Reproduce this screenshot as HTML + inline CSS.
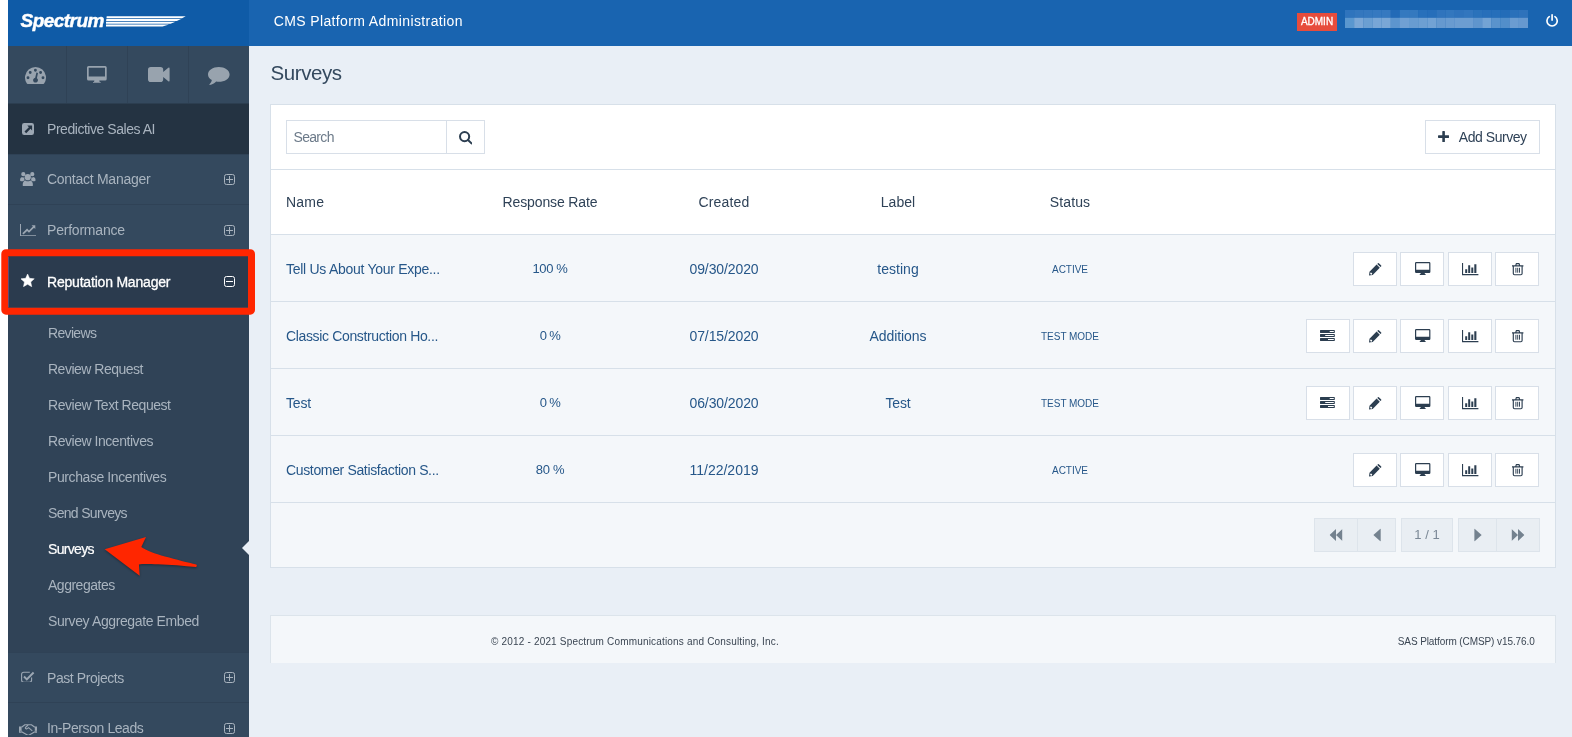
<!DOCTYPE html>
<html lang="en">
<head>
<meta charset="utf-8">
<title>Surveys - CMS Platform Administration</title>
<style>
*{box-sizing:border-box;margin:0;padding:0}
html,body{width:1572px;height:737px;overflow:hidden;background:#fff}
body{font-family:"Liberation Sans",sans-serif;font-size:13px;color:#34495e;position:relative}
.abs{position:absolute}
#wrap{position:absolute;left:8px;top:0;width:1564px;height:737px;background:#e9eff6;overflow:hidden;will-change:transform}
/* header */
#hdr-l{left:0;top:0;width:241px;height:46px;background:#0f5ba7}
#hdr-r{left:241px;top:0;width:1323px;height:46px;background:#1964b0}
#brand{left:265.7px;top:12px;color:#fff;font-size:14px;line-height:18px;white-space:nowrap}
#admin{left:1289px;top:13px;width:40px;height:18px;background:#e74c3c;color:#fff;font-size:10px;line-height:18px;text-align:center;-webkit-text-stroke:.3px #fff}
/* sidebar */
#side{left:0;top:46px;width:241px;height:691px;background:#34495e}
.ic-row{left:0;top:0;width:241px;height:57px}
.ic-row div{position:absolute;top:0;height:57px;width:1px;background:#2f4256}
.ic-row svg{position:absolute}
.nav{left:0;width:241px;height:51px;border-top:1px solid #2f4256;color:#a9b4bf;font-size:14px;line-height:50px;white-space:nowrap}
.nav .t{position:absolute;left:39px;top:0}
.nav svg.i{position:absolute;left:13px;top:17px}
.nav .pm{position:absolute;left:216px;top:19px;width:11px;height:11px;border:1px solid #a9b4bf;border-radius:2.500px}
.nav .pm:before{content:"";position:absolute;left:1px;top:4px;width:7px;height:1px;background:#a9b4bf}
.nav .pm.plus:after{content:"";position:absolute;left:4px;top:1px;width:1px;height:7px;background:#a9b4bf}
.nav.up{height:52px;line-height:51px}
.nav.up svg.i,.nav.up .pm{margin-top:1px}
.nav.dark{background:#243342;border-top-color:#2c3e50}
.nav.act{background:#2b3b4e;color:#fff;border-top-color:#2b3b4e;box-shadow:inset 1px 0 0 #1d5ba5}
.nav.act .t{-webkit-text-stroke:.3px #fff}
.nav.act .pm{border-color:#fff}
.nav.act .pm:before{background:#fff}
#sub{left:0;top:261px;width:241px;height:345px;background:#304357;padding-top:8px}
#sub a{display:block;height:36px;line-height:36px;padding-left:40px;color:#a9b4bf;font-size:14px;white-space:nowrap;text-decoration:none}
#sub a.on{color:#fff;-webkit-text-stroke:.2px #fff}
#notch{left:234px;top:541px;width:0;height:0;border-top:7px solid transparent;border-bottom:7px solid transparent;border-right:7px solid #e9eff6}
/* main */
h1{position:absolute;left:262.5px;top:58.500px;font-size:20.500px;line-height:28px;font-weight:normal;color:#34495e;white-space:nowrap}
#panel{left:262px;top:104px;width:1286px;height:464px;background:#f4f7fa;border:1px solid #d7e0e9}
#ptop{left:0;top:0;width:1284px;height:129px;background:#fff}
.hl{left:0;width:1284px;height:1px;background:#d7e0e9}
#search{left:15px;top:15px;width:161px;height:34px;border:1px solid #d8dfe8;background:#fff;color:#6c7a89;font-size:14px;line-height:32px;padding-left:6.500px}
#sbtn{left:175px;top:15px;width:39px;height:34px;border:1px solid #d8dfe8;background:#fff}
#add{left:1154px;top:15px;width:115px;height:34px;border:1px solid #d8dfe8;background:#fff;color:#2f4257;font-size:14px;line-height:32px;white-space:nowrap}
.th{top:65px;height:64px;line-height:64px;font-size:14px;color:#2f4257;white-space:nowrap}
.c{width:174px;text-align:center}
.row{left:0;width:1284px;height:67px;line-height:68px;color:#265789;font-size:14px;white-space:nowrap}
.row span{position:absolute;top:0}
.row .st{font-size:10px;letter-spacing:0;top:.500px}
.btn{position:absolute;top:17px;width:44px;height:34px;border:1px solid #d8dfe8;background:#fff}
.btn svg{position:absolute}
.pg svg{position:absolute;left:50%;top:50%;transform:translate(-50%,-50%)}
#logotxt{left:12.600px;top:8.500px;color:#fff;font-size:19px;line-height:24px;font-weight:bold;font-style:italic;letter-spacing:-.55px;white-space:nowrap;-webkit-text-stroke:.45px #fff}
.pg{top:413px;height:34px;border:1px solid #dde4eb;background:#e9eef3}
#foot{left:262px;top:615px;width:1286px;height:48px;background:#f4f7fa;border:1px solid #dce4eb;border-bottom:0;font-size:10px;line-height:51px;color:#3b4653;white-space:nowrap}
</style>
</head>
<body>
<div id="wrap">
  <div id="hdr-l" class="abs"></div>
  <div id="hdr-r" class="abs"></div>
  <div id="logotxt" class="abs">Spectrum</div><svg id="logo" class="abs" style="left:97.5px;top:15.500px" width="81" height="12" viewBox="0 0 81 12"><path fill="#fff" d="M0.700,0.300H79.700L76,2.250H0.450ZM0.350,3.050H75L70.800,5H0.100ZM0,5.800H69.500L64.500,7.750H-0.250ZM-0.350,8.550H63L56.500,10.600H-0.700Z"/></svg>
  <div id="brand" class="abs" style="letter-spacing:0.38px;">CMS Platform Administration</div>
  <div id="admin" class="abs">ADMIN</div>
  <svg id="pw" class="abs" style="left:1538px;top:14.200px" width="12.200" height="12.400" viewBox="0 0 12.400 12.600"><path fill="none" stroke="#fff" stroke-width="1.700" stroke-linecap="round" d="M3.300,2.700A5.200,5.200 0 1 0 9.100,2.700M6.200,0.850V6.200"/></svg>
  <svg id="user" class="abs" style="left:1336.500px;top:9.800px;filter:blur(.5px)" width="183" height="18" preserveAspectRatio="none" viewBox="0 0 181.500 17.800"><rect x="0.00" y="0" width="9.2" height="7.800" fill="#2f74bd"/><rect x="0.00" y="7.700" width="9.2" height="10.100" fill="#5a97cf"/><rect x="9.07" y="0" width="9.2" height="7.800" fill="#3477be"/><rect x="9.07" y="7.700" width="9.2" height="10.100" fill="#7ba7d6"/><rect x="18.14" y="0" width="9.2" height="7.800" fill="#3578bf"/><rect x="18.14" y="7.700" width="9.2" height="10.100" fill="#6b9fd2"/><rect x="27.21" y="0" width="9.2" height="7.800" fill="#3679c0"/><rect x="27.21" y="7.700" width="9.2" height="10.100" fill="#78a6d6"/><rect x="36.28" y="0" width="9.2" height="7.800" fill="#3679c0"/><rect x="36.28" y="7.700" width="9.2" height="10.100" fill="#7aa7d6"/><rect x="45.35" y="0" width="9.2" height="7.800" fill="#226ab7"/><rect x="45.35" y="7.700" width="9.2" height="10.100" fill="#5d95ce"/><rect x="54.42" y="0" width="9.2" height="7.800" fill="#3479bf"/><rect x="54.42" y="7.700" width="9.2" height="10.100" fill="#70a0d3"/><rect x="63.49" y="0" width="9.2" height="7.800" fill="#3479bf"/><rect x="63.49" y="7.700" width="9.2" height="10.100" fill="#689cd1"/><rect x="72.56" y="0" width="9.2" height="7.800" fill="#2870bb"/><rect x="72.56" y="7.700" width="9.2" height="10.100" fill="#6d9fd2"/><rect x="81.63" y="0" width="9.2" height="7.800" fill="#266eba"/><rect x="81.63" y="7.700" width="9.2" height="10.100" fill="#72a2d4"/><rect x="90.70" y="0" width="9.2" height="7.800" fill="#3074bd"/><rect x="90.70" y="7.700" width="9.2" height="10.100" fill="#6699cf"/><rect x="99.77" y="0" width="9.2" height="7.800" fill="#3377be"/><rect x="99.77" y="7.700" width="9.2" height="10.100" fill="#699bd0"/><rect x="108.84" y="0" width="9.2" height="7.800" fill="#2f73bc"/><rect x="108.84" y="7.700" width="9.2" height="10.100" fill="#6c9dd1"/><rect x="117.91" y="0" width="9.2" height="7.800" fill="#3276be"/><rect x="117.91" y="7.700" width="9.2" height="10.100" fill="#6c9dd1"/><rect x="126.98" y="0" width="9.2" height="7.800" fill="#2a72bb"/><rect x="126.98" y="7.700" width="9.2" height="10.100" fill="#5f95cd"/><rect x="136.05" y="0" width="9.2" height="7.800" fill="#276fba"/><rect x="136.05" y="7.700" width="9.2" height="10.100" fill="#73a3d4"/><rect x="145.12" y="0" width="9.2" height="7.800" fill="#266fba"/><rect x="145.12" y="7.700" width="9.2" height="10.100" fill="#5a93cc"/><rect x="154.19" y="0" width="9.2" height="7.800" fill="#236cb8"/><rect x="154.19" y="7.700" width="9.2" height="10.100" fill="#528eca"/><rect x="163.26" y="0" width="9.2" height="7.800" fill="#2a70ba"/><rect x="163.26" y="7.700" width="9.2" height="10.100" fill="#6b9cd1"/><rect x="172.33" y="0" width="9.2" height="7.800" fill="#2e72bb"/><rect x="172.33" y="7.700" width="9.2" height="10.100" fill="#6698cf"/></svg>

  <div id="side" class="abs">
    <div class="ic-row abs"><svg style="left:17.2px;top:20.7px" width="21" height="17" viewBox="0 0 21 17"><path fill="#98a3ae" fill-rule="evenodd" d="M1.600,16.100A10.500,10.500 0 1 1 19.400,16.100Q19.100,17 18.200,17H2.800Q1.900,17 1.600,16.100ZM1.55,10.80a1.45,1.45 0 1,0 2.9,0a1.45,1.45 0 1,0 -2.9,0ZM3.75,5.50a1.45,1.45 0 1,0 2.9,0a1.45,1.45 0 1,0 -2.9,0ZM8.95,3.20a1.45,1.45 0 1,0 2.9,0a1.45,1.45 0 1,0 -2.9,0ZM14.15,5.50a1.45,1.45 0 1,0 2.9,0a1.45,1.45 0 1,0 -2.9,0ZM16.55,10.80a1.45,1.45 0 1,0 2.9,0a1.45,1.45 0 1,0 -2.9,0ZM11.400,5.500L13,5.900L11.900,11.200A2.400,2.400 0 1 1 10.200,10.800Z"/></svg><svg style="left:79px;top:20.2px" width="20" height="17" viewBox="0 0 20 17"><path fill="#98a3ae" fill-rule="evenodd" d="M1.600,0H18.100Q19.700,0 19.700,1.600V13Q19.700,14.600 18.100,14.600H1.600Q0,14.600 0,13V1.600Q0,0 1.600,0ZM1.700,1.700V10.400H18V1.700ZM7.400,14.600H12.300L12.700,15.900H13.700V16.800H6V15.900H7Z"/></svg><svg style="left:139.7px;top:21px" width="22" height="15" viewBox="0 0 22 15"><path fill="#98a3ae" d="M2.8,0H12.4Q15.2,0 15.2,2.8V4.9L20.3,0.7Q21.6,0 21.6,1.5V13.5Q21.6,15 20.3,14.3L15.2,10.1V12.2Q15.2,15 12.4,15H2.8Q0,15 0,12.2V2.8Q0,0 2.8,0Z"/></svg><svg style="left:200.4px;top:21px" width="22" height="18" viewBox="0 0 22 18"><path fill="#98a3ae" d="M10.8,0C16.8,0 21.6,3.3 21.6,7.4C21.6,11.5 16.8,14.8 10.8,14.8C9.9,14.8 9,14.7 8.200,14.600C6.500,16.400 4.200,17.600 1.800,17.900C1.400,18 1.200,17.600 1.500,17.300C2.700,16.200 3.600,14.700 3.800,13.100C1.500,11.700 0,9.700 0,7.400C0,3.300 4.800,0 10.800,0Z"/></svg><div style="left:58px"></div><div style="left:119px"></div><div style="left:180px"></div></div>
    <div class="nav dark abs" style="top:57px;line-height:50px"><svg class="i" style="left:14px;top:18.9px" width="12" height="12" viewBox="0 0 12 12"><path fill="#9ca7b3" fill-rule="evenodd" d="M2.200,0H9.800Q12,0 12,2.200V9.800Q12,12 9.800,12H2.200Q0,12 0,9.800V2.200Q0,0 2.200,0ZM5.300,2.600H10.100V7.400L8.550,5.850L4.200,10.200L2.500,8.500L6.850,4.150Z"/></svg><span class="t" style="letter-spacing:-0.46px;">Predictive Sales AI</span></div>
    <div class="nav abs" style="top:108px;line-height:48px"><svg class="i" style="left:12.1px;top:16.700px" width="15.6" height="14.6" viewBox="0 0 15.6 14.6"><path fill="#9ca7b3" d="M4.70,5.20a3.1,3.1 0 1,0 6.2,0a3.1,3.1 0 1,0 -6.2,0ZM2.700,13Q2.700,9.100 5.400,8.500Q7.800,10.200 10.200,8.500Q12.900,9.100 12.900,13Q12.900,14.600 11.300,14.600H4.300Q2.700,14.600 2.700,13ZM1.20,2.20a2.1,2.1 0 1,0 4.2,0a2.1,2.1 0 1,0 -4.2,0ZM10.20,2.20a2.1,2.1 0 1,0 4.2,0a2.1,2.1 0 1,0 -4.2,0ZM0,8Q0,5.100 2,4.900Q3.100,5.700 4.400,5.400Q4,7 4.700,8.300Q3.600,8.600 3,9.300H1.400Q0,9.300 0,8ZM15.600,8Q15.600,5.100 13.600,4.900Q12.500,5.700 11.200,5.400Q11.600,7 10.900,8.300Q12,8.600 12.600,9.300H14.200Q15.600,9.300 15.600,8Z"/></svg><span class="t" style="letter-spacing:-0.27px;">Contact Manager</span><i class="pm plus"></i></div>
    <div class="nav up abs" style="top:158px"><svg class="i" style="left:11.8px;top:17.800px" width="16.4" height="12.300" viewBox="0 0 16.4 12.300"><path fill="#9ca7b3" d="M0,0H1V11.300H16.400V12.300H0ZM11.600,1.300H15.300V5L14.050,3.750L9,8.800L7.100,6.900L3.500,10.500L2.300,9.300L7.100,4.500L9,6.400L12.850,2.550Z"/></svg><span class="t" style="letter-spacing:-0.21px;">Performance</span><i class="pm plus"></i></div>
    <div class="nav act abs" style="top:210px"><svg class="i" style="left:13.400px;top:17.300px" width="13.300" height="12.900" viewBox="0 0 13.300 12.900"><path fill="#fff" stroke="#fff" stroke-width=".5" stroke-linejoin="round" d="M6.60,0.00L8.54,4.33L13.26,4.84L9.74,8.02L10.71,12.66L6.60,10.30L2.49,12.66L3.46,8.02L-0.06,4.84L4.66,4.33Z"/></svg><span class="t" style="letter-spacing:-0.2px;">Reputation Manager</span><i class="pm"></i></div>
    <div id="sub" class="abs">
      <a style="letter-spacing:-0.67px;">Reviews</a><a style="letter-spacing:-0.5px;">Review Request</a><a style="letter-spacing:-0.46px;">Review Text Request</a><a style="letter-spacing:-0.46px;">Review Incentives</a><a style="letter-spacing:-0.41px;">Purchase Incentives</a><a style="letter-spacing:-0.69px;">Send Surveys</a><a class="on" style="letter-spacing:-0.68px">Surveys</a><a style="letter-spacing:-0.49px;">Aggregates</a><a style="letter-spacing:-0.39px;">Survey Aggregate Embed</a>
    </div>
    <div class="nav abs" style="top:606px"><svg class="i" style="left:13.200px;top:17.600px" width="13.600" height="11.800" viewBox="0 0 13.600 11.800"><path fill="none" stroke="#9ca7b3" stroke-width="1.100" d="M10.600,6.500V9Q10.600,11.200 8.400,11.200H2.800Q0.600,11.200 0.600,9V3.400Q0.600,1.200 2.800,1.200H8.800"/><path fill="#9ca7b3" d="M3.700,4.800L5.800,6.900L11.900,0.800L13.300,2.200L5.800,9.700L2.300,6.200Z"/></svg><span class="t" style="letter-spacing:-0.43px;">Past Projects</span><i class="pm plus"></i></div>
    <div class="nav up abs" style="top:656px"><svg class="i" style="left:10.8px;top:19.600px" width="18.400" height="11.800" viewBox="0 0 18.400 11.800"><path fill="#9ca7b3" fill-rule="evenodd" d="M0,2.500H2.600V8.700H0ZM15.800,2.500H18.400V8.700H15.800ZM0.900,6.700h0.900v0.900h-0.900ZM16.600,6.700h0.900v0.900h-0.900Z"/><path fill="none" stroke="#9ca7b3" stroke-width="1.100" stroke-linejoin="round" d="M2.600,3.300L5.900,0.800H12.400L15.800,3.300M15.800,7.700L13.300,9.300L9.800,11.200Q8.800,11.500 7.900,10.800L2.600,7.700M9.100,1.200L6.400,3.500Q6.100,5 7.800,4.900L9.600,3.600L13.300,6.900"/></svg><span class="t" style="letter-spacing:-0.42px;">In-Person Leads</span><i class="pm plus"></i></div>
  </div>
  <div id="notch" class="abs"></div>

  <h1 style="letter-spacing:-0.41px">Surveys</h1>
  <div id="panel" class="abs">
    <div id="ptop" class="abs"></div>
    <div class="hl abs" style="top:64px"></div>
    <div class="hl abs" style="top:129px"></div>
    <div class="hl abs" style="top:196px"></div>
    <div class="hl abs" style="top:263px"></div>
    <div class="hl abs" style="top:330px"></div>
    <div class="hl abs" style="top:397px"></div>
    <div id="search" class="abs" style="letter-spacing:-0.68px;">Search</div>
    <div id="sbtn" class="abs"><svg style="position:absolute;left:11.900px;top:10.100px" width="13.600" height="13.600" viewBox="0 0 13.600 13.600"><circle cx="5.600" cy="5.600" r="4.600" fill="none" stroke="#2c3e50" stroke-width="2"/><path d="M9,9L12.500,12.400" stroke="#2c3e50" stroke-width="2" stroke-linecap="round"/></svg></div>
    <div id="add" class="abs"><svg style="position:absolute;left:11.800px;top:10px" width="11.200" height="11.200" viewBox="0 0 11.200 11.200"><path fill="#2c3e50" d="M4.300,0.600Q4.300,0 4.900,0H6.300Q6.900,0 6.900,0.600V4.300H10.600Q11.200,4.300 11.200,4.900V6.300Q11.200,6.900 10.600,6.900H6.900V10.600Q6.900,11.200 6.300,11.200H4.900Q4.300,11.200 4.300,10.600V6.900H0.600Q0,6.900 0,6.300V4.900Q0,4.300 0.600,4.300H4.300Z"/></svg><span style="letter-spacing:-0.45px;position:absolute;left:32.800px">Add Survey</span></div>
    <div class="th abs" style="letter-spacing:0.22px;left:15px">Name</div>
    <div class="th c abs" style="letter-spacing:-0.12px;left:192px">Response Rate</div>
    <div class="th c abs" style="letter-spacing:0.17px;left:366px">Created</div>
    <div class="th c abs" style="letter-spacing:0.06px;left:540px">Label</div>
    <div class="th c abs" style="letter-spacing:0.1px;left:712px">Status</div>

    <div class="row abs" style="top:130px"><span style="letter-spacing:-0.28px;left:15px">Tell Us About Your Expe...</span><span class="c" style="letter-spacing:-0.38px;font-size:13px;left:192px">100 %</span><span class="c" style="letter-spacing:-0.11px;left:366px">09/30/2020</span><span class="c" style="letter-spacing:0.02px;left:540px">testing</span><span class="c st" style="letter-spacing:-0.02px;left:712px">ACTIVE</span><i class="btn" style="left:1082px"><svg style="left:14.700px;top:9.800px" width="13" height="13" viewBox="0 0 13 13"><path fill="#2c3e50" fill-rule="evenodd" d="M0,12.400L0.500,8.700L7.600,1.600L10.800,4.800L3.700,11.900ZM8.300,0.900L8.900,0.300Q9.500,-0.200 10.100,0.400L12,2.300Q12.600,2.900 12.100,3.500L11.500,4.100ZM1.500,10.100a0.950,0.550 45 1,0 1.300,1a0.950,0.550 45 1,0 -1.300,-1Z"/></svg></i><i class="btn" style="left:1129px"><svg style="left:13.600px;top:9px" width="16" height="13" viewBox="0 0 16 13"><path fill="#2c3e50" fill-rule="evenodd" d="M1.200,0H14.200Q15.400,0 15.400,1.200V9.800Q15.400,11 14.200,11H1.200Q0,11 0,9.800V1.200Q0,0 1.200,0ZM1.200,1.200V7.800H14.200V1.200ZM5.800,11H9.600L10,12.100H10.600V13H4.800V12.100H5.400Z"/></svg></i><i class="btn" style="left:1177px"><svg style="left:12.800px;top:9.900px" width="17" height="13" viewBox="0 0 17 13"><path fill="#2c3e50" d="M0,0H1.100V11.100H16.400V12.200H0ZM3.200,6.200H5.200V10H3.200ZM6.200,2.300H8.200V10H6.200ZM9.300,4.400H11.300V10H9.300ZM12.300,1.200H14.400V10H12.300Z"/></svg></i><i class="btn" style="left:1224px"><svg style="left:15.700px;top:9.800px" width="12" height="13" viewBox="0 0 12 13"><path fill="none" stroke="#2c3e50" stroke-width="1.150" stroke-linejoin="round" d="M0,2.800H11.400M3.700,2.800L4.300,0.600H7.100L7.700,2.800M1.300,2.800V10.500Q1.300,11.700 2.500,11.700H8.900Q10.100,11.700 10.100,10.500V2.800"/><path fill="none" stroke="#2c3e50" stroke-width="0.950" d="M3.900,4.800V9.700M5.700,4.800V9.700M7.500,4.800V9.700"/></svg></i></div>
    <div class="row abs" style="top:197px"><span style="letter-spacing:-0.35px;left:15px">Classic Construction Ho...</span><span class="c" style="letter-spacing:-0.63px;font-size:13px;left:192px">0 %</span><span class="c" style="letter-spacing:-0.11px;left:366px">07/15/2020</span><span class="c" style="letter-spacing:-0.07px;left:540px">Additions</span><span class="c st" style="letter-spacing:-0.02px;left:712px">TEST MODE</span><i class="btn" style="left:1035px"><svg style="left:13px;top:10px" width="15" height="11" viewBox="0 0 15 11"><path fill="#2c3e50" fill-rule="evenodd" d="M0.400,0H14.400Q14.800,0 14.800,0.400V2.600Q14.800,3 14.400,3H0.400Q0,3 0,2.600V0.400Q0,0 0.400,0ZM9.700,1V2H13.800V1ZM0.400,4H14.400Q14.800,4 14.800,4.400V6.600Q14.800,7 14.400,7H0.400Q0,7 0,6.600V4.400Q0,4 0.400,4ZM5.200,5V6H13.800V5ZM0.400,8H14.400Q14.800,8 14.800,8.400V10.600Q14.800,11 14.400,11H0.400Q0,11 0,10.600V8.400Q0,8 0.400,8ZM8,9V10H13.800V9Z"/></svg></i><i class="btn" style="left:1082px"><svg style="left:14.700px;top:9.800px" width="13" height="13" viewBox="0 0 13 13"><path fill="#2c3e50" fill-rule="evenodd" d="M0,12.400L0.500,8.700L7.600,1.600L10.800,4.800L3.700,11.900ZM8.300,0.900L8.900,0.300Q9.500,-0.200 10.100,0.400L12,2.300Q12.600,2.900 12.100,3.500L11.500,4.100ZM1.500,10.100a0.950,0.550 45 1,0 1.300,1a0.950,0.550 45 1,0 -1.300,-1Z"/></svg></i><i class="btn" style="left:1129px"><svg style="left:13.600px;top:9px" width="16" height="13" viewBox="0 0 16 13"><path fill="#2c3e50" fill-rule="evenodd" d="M1.200,0H14.200Q15.400,0 15.400,1.200V9.800Q15.400,11 14.200,11H1.200Q0,11 0,9.800V1.200Q0,0 1.200,0ZM1.200,1.200V7.800H14.200V1.200ZM5.800,11H9.600L10,12.100H10.600V13H4.800V12.100H5.400Z"/></svg></i><i class="btn" style="left:1177px"><svg style="left:12.800px;top:9.900px" width="17" height="13" viewBox="0 0 17 13"><path fill="#2c3e50" d="M0,0H1.100V11.100H16.400V12.200H0ZM3.200,6.200H5.200V10H3.200ZM6.200,2.300H8.200V10H6.200ZM9.300,4.400H11.300V10H9.300ZM12.300,1.200H14.400V10H12.300Z"/></svg></i><i class="btn" style="left:1224px"><svg style="left:15.700px;top:9.800px" width="12" height="13" viewBox="0 0 12 13"><path fill="none" stroke="#2c3e50" stroke-width="1.150" stroke-linejoin="round" d="M0,2.800H11.400M3.700,2.800L4.300,0.600H7.100L7.700,2.800M1.300,2.800V10.500Q1.300,11.700 2.500,11.700H8.900Q10.100,11.700 10.100,10.500V2.800"/><path fill="none" stroke="#2c3e50" stroke-width="0.950" d="M3.900,4.800V9.700M5.700,4.800V9.700M7.500,4.800V9.700"/></svg></i></div>
    <div class="row abs" style="top:264px"><span style="letter-spacing:-0.17px;left:15px">Test</span><span class="c" style="letter-spacing:-0.63px;font-size:13px;left:192px">0 %</span><span class="c" style="letter-spacing:-0.11px;left:366px">06/30/2020</span><span class="c" style="letter-spacing:-0.17px;left:540px">Test</span><span class="c st" style="letter-spacing:-0.02px;left:712px">TEST MODE</span><i class="btn" style="left:1035px"><svg style="left:13px;top:10px" width="15" height="11" viewBox="0 0 15 11"><path fill="#2c3e50" fill-rule="evenodd" d="M0.400,0H14.400Q14.800,0 14.800,0.400V2.600Q14.800,3 14.400,3H0.400Q0,3 0,2.600V0.400Q0,0 0.400,0ZM9.700,1V2H13.800V1ZM0.400,4H14.400Q14.800,4 14.800,4.400V6.600Q14.800,7 14.400,7H0.400Q0,7 0,6.600V4.400Q0,4 0.400,4ZM5.200,5V6H13.800V5ZM0.400,8H14.400Q14.800,8 14.800,8.400V10.600Q14.800,11 14.400,11H0.400Q0,11 0,10.600V8.400Q0,8 0.400,8ZM8,9V10H13.800V9Z"/></svg></i><i class="btn" style="left:1082px"><svg style="left:14.700px;top:9.800px" width="13" height="13" viewBox="0 0 13 13"><path fill="#2c3e50" fill-rule="evenodd" d="M0,12.400L0.500,8.700L7.600,1.600L10.800,4.800L3.700,11.900ZM8.300,0.900L8.900,0.300Q9.500,-0.200 10.100,0.400L12,2.300Q12.600,2.900 12.100,3.500L11.500,4.100ZM1.500,10.100a0.950,0.550 45 1,0 1.300,1a0.950,0.550 45 1,0 -1.300,-1Z"/></svg></i><i class="btn" style="left:1129px"><svg style="left:13.600px;top:9px" width="16" height="13" viewBox="0 0 16 13"><path fill="#2c3e50" fill-rule="evenodd" d="M1.200,0H14.200Q15.400,0 15.400,1.200V9.800Q15.400,11 14.200,11H1.200Q0,11 0,9.800V1.200Q0,0 1.200,0ZM1.200,1.200V7.800H14.200V1.200ZM5.800,11H9.600L10,12.100H10.600V13H4.800V12.100H5.400Z"/></svg></i><i class="btn" style="left:1177px"><svg style="left:12.800px;top:9.900px" width="17" height="13" viewBox="0 0 17 13"><path fill="#2c3e50" d="M0,0H1.100V11.100H16.400V12.200H0ZM3.200,6.200H5.200V10H3.200ZM6.200,2.300H8.200V10H6.200ZM9.300,4.400H11.300V10H9.300ZM12.300,1.200H14.400V10H12.300Z"/></svg></i><i class="btn" style="left:1224px"><svg style="left:15.700px;top:9.800px" width="12" height="13" viewBox="0 0 12 13"><path fill="none" stroke="#2c3e50" stroke-width="1.150" stroke-linejoin="round" d="M0,2.800H11.400M3.700,2.800L4.300,0.600H7.100L7.700,2.800M1.300,2.800V10.500Q1.300,11.700 2.500,11.700H8.900Q10.100,11.700 10.100,10.500V2.800"/><path fill="none" stroke="#2c3e50" stroke-width="0.950" d="M3.900,4.800V9.700M5.700,4.800V9.700M7.500,4.800V9.700"/></svg></i></div>
    <div class="row abs" style="top:331px"><span style="letter-spacing:-0.35px;left:15px">Customer Satisfaction S...</span><span class="c" style="letter-spacing:-0.3px;font-size:13px;left:192px">80 %</span><span class="c" style="letter-spacing:0.0px;left:366px">11/22/2019</span><span class="c" style="left:540px"></span><span class="c st" style="letter-spacing:-0.02px;left:712px">ACTIVE</span><i class="btn" style="left:1082px"><svg style="left:14.700px;top:9.800px" width="13" height="13" viewBox="0 0 13 13"><path fill="#2c3e50" fill-rule="evenodd" d="M0,12.400L0.500,8.700L7.600,1.600L10.800,4.800L3.700,11.900ZM8.300,0.900L8.900,0.300Q9.500,-0.200 10.100,0.400L12,2.300Q12.600,2.900 12.100,3.500L11.500,4.100ZM1.500,10.100a0.950,0.550 45 1,0 1.300,1a0.950,0.550 45 1,0 -1.300,-1Z"/></svg></i><i class="btn" style="left:1129px"><svg style="left:13.600px;top:9px" width="16" height="13" viewBox="0 0 16 13"><path fill="#2c3e50" fill-rule="evenodd" d="M1.200,0H14.200Q15.400,0 15.400,1.200V9.800Q15.400,11 14.200,11H1.200Q0,11 0,9.800V1.200Q0,0 1.200,0ZM1.200,1.200V7.800H14.200V1.200ZM5.800,11H9.600L10,12.100H10.600V13H4.800V12.100H5.400Z"/></svg></i><i class="btn" style="left:1177px"><svg style="left:12.800px;top:9.900px" width="17" height="13" viewBox="0 0 17 13"><path fill="#2c3e50" d="M0,0H1.100V11.100H16.400V12.200H0ZM3.200,6.200H5.200V10H3.200ZM6.200,2.300H8.200V10H6.200ZM9.300,4.400H11.300V10H9.300ZM12.300,1.200H14.400V10H12.300Z"/></svg></i><i class="btn" style="left:1224px"><svg style="left:15.700px;top:9.800px" width="12" height="13" viewBox="0 0 12 13"><path fill="none" stroke="#2c3e50" stroke-width="1.150" stroke-linejoin="round" d="M0,2.800H11.400M3.700,2.800L4.300,0.600H7.100L7.700,2.800M1.300,2.800V10.500Q1.300,11.700 2.500,11.700H8.900Q10.100,11.700 10.100,10.500V2.800"/><path fill="none" stroke="#2c3e50" stroke-width="0.950" d="M3.900,4.800V9.700M5.700,4.800V9.700M7.500,4.800V9.700"/></svg></i></div>

    <div class="pg abs" style="left:1043px;width:44px"><svg width="13" height="12" viewBox="0 0 12.600 11.800"><path fill="#74828f" d="M0,5.900L6.300,0V11.800ZM6.300,5.900L12.600,0V11.800Z"/></svg></div>
    <div class="pg abs" style="left:1086px;width:39px"><svg width="8" height="13" viewBox="0 0 7.200 12.800"><path fill="#74828f" d="M0,6.400L7.200,0V12.800Z"/></svg></div>
    <div class="pg abs" style="letter-spacing:0.02px;left:1130px;width:52px;text-align:center;line-height:32px;color:#7b8896;font-size:13px">1 / 1</div>
    <div class="pg abs" style="left:1187px;width:39px"><svg width="8" height="13" viewBox="0 0 7.200 12.800"><path fill="#74828f" d="M7.200,6.400L0,0V12.800Z"/></svg></div>
    <div class="pg abs" style="left:1225px;width:44px"><svg width="13" height="12" viewBox="0 0 12.600 11.800"><path fill="#74828f" d="M12.600,5.900L6.300,0V11.800ZM6.300,5.900L0,0V11.800Z"/></svg></div>
  </div>

  <div id="foot" class="abs"><span style="letter-spacing:0.18px;position:absolute;left:220px">© 2012 - 2021 Spectrum Communications and Consulting, Inc.</span><span style="letter-spacing:-0.09px;position:absolute;right:20.300px">SAS Platform (CMSP) v15.76.0</span></div>
</div>
<svg id="annot" class="abs" style="left:0;top:0;pointer-events:none" width="330" height="737" viewBox="0 0 330 737"><rect x="4.800" y="252.700" width="246.700" height="58.500" rx="1.200" fill="none" stroke="#ff2600" stroke-width="7"/><path fill="#ff2600" style="filter:drop-shadow(0 1px 1px rgba(0,0,0,.35))" d="M104.700,549.300L146,537.100L141.300,546.900C146,550.500 155,553.500 165,556.500C176,559.500 188,562.500 196.300,564.500Q197.500,565.900 195.900,567.100C184,566 170,564.600 158,564.300C150,564.100 143,563.800 138.900,564.400L139.700,575.800Z"/></svg>
</body>
</html>
